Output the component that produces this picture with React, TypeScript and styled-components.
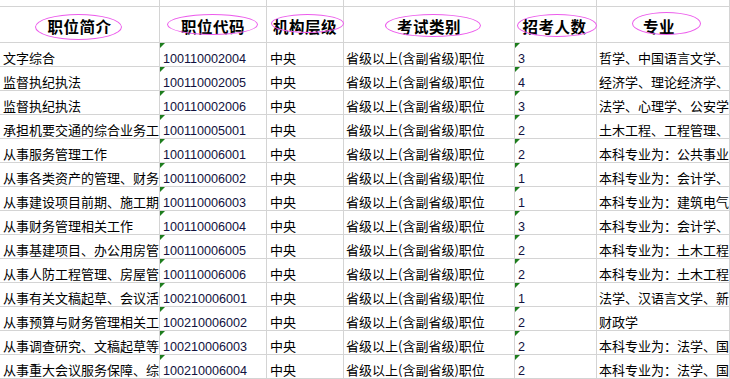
import { Fragment } from "react";
import styled, { createGlobalStyle } from "styled-components";

const GlobalStyle = createGlobalStyle`
  html, body {
    margin: 0;
    padding: 0;
    background: #fff;
  }
  body {
    width: 730px;
    height: 379px;
    overflow: hidden;
  }
`;

const Sheet = styled.div`
  display: grid;
  grid-template-columns: 160px 107px 77px 171px 82px 1fr;
  grid-template-rows: 7px 36px;
  grid-auto-rows: 24px;
  width: 730px;
  overflow: hidden;
`;

const Cell = styled.div<{ $mark?: boolean; $num?: boolean; $pad?: number }>`
  position: relative;
  box-sizing: border-box;
  border-right: 1px solid #d4d4d4;
  border-bottom: 1px solid #d4d4d4;
  display: flex;
  align-items: flex-end;
  padding: 0 0 ${(p) => (p.$num ? 1 : 0)}px ${(p) => p.$pad ?? 3}px;
  overflow: hidden;
  white-space: nowrap;
  font-family: ${(p) =>
    p.$num
      ? '"Liberation Sans", Arial, sans-serif'
      : '"Noto Sans CJK SC", "Liberation Sans", sans-serif'};
  font-size: ${(p) => (p.$num ? "12.6px" : "13px")};
  line-height: ${(p) => (p.$num ? 12 : 17)}px;
  color: ${(p) => (p.$num ? "#111140" : "#000")};

  &::before {
    content: "";
    display: ${(p) => (p.$mark ? "block" : "none")};
    position: absolute;
    left: 0;
    top: 0;
    border-top: 5px solid #1d7d1d;
    border-right: 5px solid transparent;
  }
`;

const TopCell = styled.div`
  box-sizing: border-box;
  border-right: 1px solid #d4d4d4;
  border-bottom: 1px solid #d4d4d4;
`;

const HeadCell = styled.div`
  position: relative;
  box-sizing: border-box;
  border-right: 1px solid #d4d4d4;
  border-bottom: 1px solid #d4d4d4;
  display: flex;
  align-items: center;
  justify-content: center;
  font-family: "Noto Sans CJK SC", "Liberation Sans", sans-serif;
  font-weight: 700;
  font-size: 15.5px;
  color: #000;
  white-space: nowrap;
`;

const HeadText = styled.span<{ $shift?: number }>`
  position: relative;
  top: 1px;
  left: ${(p) => p.$shift ?? 0}px;
  letter-spacing: 0.5px;
`;

/* the hand-drawn annotation rings laid over the header labels */
const Ring = styled.span<{ $x: number; $y: number; $w: number; $h: number }>`
  position: absolute;
  left: ${(p) => p.$x}px;
  top: ${(p) => p.$y}px;
  width: ${(p) => p.$w}px;
  height: ${(p) => p.$h}px;
  box-sizing: border-box;
  border: 1.4px solid #ec5cec;
  border-radius: 50%;
  pointer-events: none;
`;

type Head = {
  label: string;
  ring: [number, number, number, number];
  shift?: number;
};

const heads: Head[] = [
  { label: "职位简介", ring: [35, 7, 87, 26] },
  { label: "职位代码", ring: [7, 7, 91, 21] },
  { label: "机构层级", ring: [4, 7, 73, 19] },
  { label: "考试类别", ring: [41, 7, 96, 23] },
  { label: "招考人数", ring: [2, 7, 80, 23], shift: -1 },
  { label: "专业", ring: [35, 5, 69, 23], shift: -4 },
];

const rows: [string, string, string, string][] = [
  ["文字综合", "100110002004", "3", "哲学、中国语言文学、"],
  ["监督执纪执法", "100110002005", "4", "经济学、理论经济学、"],
  ["监督执纪执法", "100110002006", "3", "法学、心理学、公安学"],
  ["承担机要交通的综合业务工", "100110005001", "2", "土木工程、工程管理、"],
  ["从事服务管理工作", "100110006001", "2", "本科专业为：公共事业"],
  ["从事各类资产的管理、财务", "100110006002", "1", "本科专业为：会计学、"],
  ["从事建设项目前期、施工期", "100110006003", "1", "本科专业为：建筑电气"],
  ["从事财务管理相关工作", "100110006004", "3", "本科专业为：会计学、"],
  ["从事基建项目、办公用房管", "100110006005", "2", "本科专业为：土木工程"],
  ["从事人防工程管理、房屋管", "100110006006", "2", "本科专业为：土木工程"],
  ["从事有关文稿起草、会议活", "100210006001", "1", "法学、汉语言文学、新"],
  ["从事预算与财务管理相关工", "100210006002", "2", "财政学"],
  ["从事调查研究、文稿起草等", "100210006003", "2", "本科专业为：法学、国"],
  ["从事重大会议服务保障、综", "100210006004", "2", "本科专业为：法学、国"],
];

export default function App() {
  return (
    <>
      <GlobalStyle />
      <Sheet>
        {heads.map((h) => (
          <TopCell key={"t" + h.label} />
        ))}
        {heads.map((h) => (
          <HeadCell key={h.label}>
            <HeadText $shift={h.shift}>{h.label}</HeadText>
            <Ring $x={h.ring[0]} $y={h.ring[1]} $w={h.ring[2]} $h={h.ring[3]} />
          </HeadCell>
        ))}
        {rows.map(([intro, code, count, major], i) => (
          <Fragment key={i}>
            <Cell>{intro}</Cell>
            <Cell $mark $num>
              {code}
            </Cell>
            <Cell>中央</Cell>
            <Cell $pad={2}>省级以上(含副省级)职位</Cell>
            <Cell $mark $num>
              {count}
            </Cell>
            <Cell $pad={2}>{major}</Cell>
          </Fragment>
        ))}
      </Sheet>
    </>
  );
}
